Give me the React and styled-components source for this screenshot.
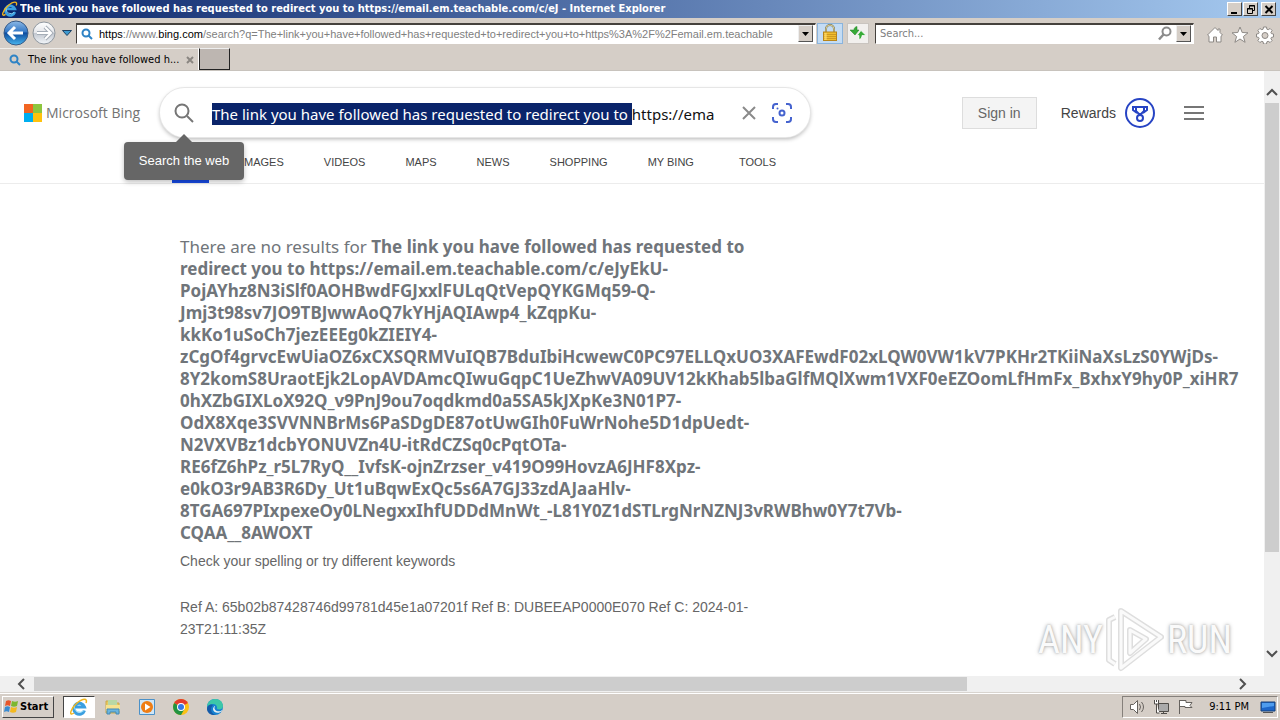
import { useEffect, useRef, useState } from "react";
import styled, { createGlobalStyle } from "styled-components";

const LINK_TEXT = "The link you have followed has requested to redirect you to ";

const TITLE = `${LINK_TEXT}https://email.em.teachable.com/c/eJ - Internet Explorer`;

const ADDRESS_PATH =
	"/search?q=The+link+you+have+followed+has+requested+to+redirect+you+to+https%3A%2F%2Femail.em.teachable";

const QUERY_LINES = [
	"redirect you to https://email.em.teachable.com/c/eJyEkU-",
	"PojAYhz8N3iSlf0AOHBwdFGJxxlFULqQtVepQYKGMq59-Q-",
	"Jmj3t98sv7JO9TBJwwAoQ7kYHjAQIAwp4_kZqpKu-",
	"kkKo1uSoCh7jezEEEg0kZIEIY4-",
	"zCgOf4grvcEwUiaOZ6xCXSQRMVuIQB7BduIbiHcwewC0PC97ELLQxUO3XAFEwdF02xLQW0VW1kV7PKHr2TKiiNaXsLzS0YWjDs-",
	"8Y2komS8UraotEjk2LopAVDAmcQIwuGqpC1UeZhwVA09UV12kKhab5lbaGlfMQlXwm1VXF0eEZOomLfHmFx_BxhxY9hy0P_xiHR7",
	"0hXZbGIXLoX92Q_v9PnJ9ou7oqdkmd0a5SA5kJXpKe3N01P7-",
	"OdX8Xqe3SVVNNBrMs6PaSDgDE87otUwGIh0FuWrNohe5D1dpUedt-",
	"N2VXVBz1dcbYONUVZn4U-itRdCZSq0cPqtOTa-",
	"RE6fZ6hPz_r5L7RyQ__IvfsK-ojnZrzser_v419O99HovzA6JHF8Xpz-",
	"e0kO3r9AB3R6Dy_Ut1uBqwExQc5s6A7GJ33zdAJaaHlv-",
	"8TGA697PIxpexeOy0LNegxxIhfUDDdMnWt_-L81Y0Z1dSTLrgNrNZNJ3vRWBhw0Y7t7Vb-",
	"CQAA__8AWOXT",
];

const SCOPES = ["IMAGES", "VIDEOS", "MAPS", "NEWS", "SHOPPING", "MY BING", "TOOLS"];

export default function App() {
	return (
		<>
			<GlobalStyle />
			<Desktop>
				<TitleBar>
					<IeLogo size={16} />
					<h1>{TITLE}</h1>
					<div className="controls">
						<CaptionButton aria-label="Minimize">
							<svg width="10" height="9">
								<path d="M1 8h6" stroke="#000" strokeWidth="2" />
							</svg>
						</CaptionButton>
						<CaptionButton aria-label="Restore">
							<svg width="10" height="9" fill="none" stroke="#000">
								<path d="M3.5 3V.5h5v5H7M3 1h6M1.5 3.5h5v5h-5zM1 4h6" />
							</svg>
						</CaptionButton>
						<CaptionButton $apart aria-label="Close">
							<svg width="10" height="9">
								<path d="M1.5 1l7 7M8.5 1l-7 7" stroke="#000" strokeWidth="2" />
							</svg>
						</CaptionButton>
					</div>
				</TitleBar>
				<AddressBar />
				<TabStrip>
					<Tab>
						<Magnifier />
						<span>The link you have followed h...</span>
						<button aria-label="Close tab">
							<svg width="8" height="8">
								<path d="M1 1l6 6M7 1L1 7" stroke="#8a8681" strokeWidth="2" />
							</svg>
						</button>
					</Tab>
					<NewTab aria-label="New tab" />
				</TabStrip>
				<Viewport>
					<Page>
						<BingHeader />
						<Results />
						<Watermark />
					</Page>
					<VerticalScroll>
						<Arrow d="M1 8l5-5 5 5" />
						<div className="track">
							<div className="thumb" />
						</div>
						<Arrow d="M1 3l5 5 5-5" />
					</VerticalScroll>
				</Viewport>
				<HorizontalScroll>
					<Arrow d="M8 1L3 6l5 5" />
					<div className="track">
						<div className="thumb" />
					</div>
					<Arrow d="M4 1l5 5-5 5" />
				</HorizontalScroll>
				<Taskbar />
			</Desktop>
		</>
	);
}

function AddressBar() {
	return (
		<Toolbar>
			<RoundButton aria-label="Back">
				<svg width="26" height="26" viewBox="0 0 26 26">
					<defs>
						<linearGradient id="back" x2="0" y2="1">
							<stop offset="0" stopColor="#8db9e6" />
							<stop offset=".45" stopColor="#3478c6" />
							<stop offset=".5" stopColor="#0d4b9e" />
							<stop offset="1" stopColor="#48b6ef" />
						</linearGradient>
					</defs>
					<circle cx="13" cy="13" r="12" fill="url(#back)" stroke="#385a86" />
					<path d="M20 13H7M12 7l-6 6 6 6" fill="none" stroke="#fff" strokeWidth="3" />
				</svg>
			</RoundButton>
			<RoundButton aria-label="Forward">
				<svg width="26" height="26" viewBox="0 0 26 26">
					<defs>
						<linearGradient id="forward" x2="0" y2="1">
							<stop offset="0" stopColor="#fff" />
							<stop offset=".48" stopColor="#e4e6ea" />
							<stop offset=".52" stopColor="#c3c8d0" />
							<stop offset="1" stopColor="#f3f7fb" />
						</linearGradient>
					</defs>
					<circle cx="13" cy="13" r="11" fill="url(#forward)" stroke="#8f979f" />
					<path d="M6 13h13M14 7l6 6-6 6" fill="none" stroke="#a5adb7" strokeWidth="4" />
					<path d="M6 13h13M14 7l6 6-6 6" fill="none" stroke="#fff" strokeWidth="2" />
				</svg>
			</RoundButton>
			<RoundButton $small aria-label="Recent pages">
				<svg width="10" height="6">
					<path d="M.5.5h9L5 5.5z" fill="#3d9ad0" stroke="#1b4164" />
				</svg>
			</RoundButton>
			<Field $grow>
				<Magnifier />
				<Address>
					<input aria-label="Address" defaultValue={`https://www.bing.com${ADDRESS_PATH}`} />
					<span aria-hidden="true">
						<b>https</b>://www.<b>bing.com</b>
						{ADDRESS_PATH}
					</span>
				</Address>
				<DropButton aria-label="Show address list">
					<svg width="7" height="4">
						<path d="M0 0h7L3.5 4z" />
					</svg>
				</DropButton>
			</Field>
			<SquareButton $active aria-label="Security report">
				<svg width="16" height="18" viewBox="0 0 16 18">
					<path d="M4 9V5a4 4 0 0 1 8 0v4" fill="none" stroke="#817a58" strokeWidth="2" />
					<path d="M4 8V5a4 4 0 0 1 8 0v3" fill="none" stroke="#d6cb93" />
					<rect x="1.5" y="8" width="13" height="8.5" fill="#f0be2e" stroke="#b8851a" />
					<path d="M2 10.5h12M2 12.5h12M2 14.5h12" stroke="#cf9a22" />
					<path d="M3 9v7M4 9v7" stroke="#ffdc6e" />
				</svg>
			</SquareButton>
			<SquareButton aria-label="Refresh">
				<svg width="18" height="16" viewBox="0 0 18 16">
					<path d="M8 1.5C6 2 5 3 5 5H1l5 5 4-5H8c0-2 0-2 0-3.5z" fill="#37ab37" stroke="#1e7c25" strokeWidth=".5" />
					<path d="M10 14.5c2-.5 3-2 3-4h4l-5-5-4 5h2c0 2 0 2 0 4z" fill="#37ab37" stroke="#fff" strokeWidth=".7" />
				</svg>
			</SquareButton>
			<Field $width={319}>
				<input aria-label="Search" placeholder="Search..." />
				<svg width="14" height="15" viewBox="0 0 14 15" fill="none" stroke="#8b8b8b">
					<circle cx="8.5" cy="5.5" r="4" strokeWidth="2" />
					<path d="M5.5 8.5L1 13.5" strokeWidth="2.5" />
				</svg>
				<DropButton aria-label="Search options">
					<svg width="7" height="4">
						<path d="M0 0h7L3.5 4z" />
					</svg>
				</DropButton>
			</Field>
			<CommandIcons>
				<button aria-label="Home">
					<svg width="18" height="18" viewBox="0 0 18 18">
						<path d="M9 1.5L1.5 9l1.5 1.2V16h4.5v-5h3v5H15v-5.8L16.5 9 14 6.5V3h-2v1.5z" />
					</svg>
				</button>
				<button aria-label="Favorites">
					<svg width="18" height="18" viewBox="0 0 18 18">
						<path d="M9 1l2.2 5.5 5.8.3-4.6 3.7 1.7 5.8L9 13l-5.1 3.3 1.7-5.8L1 6.8l5.8-.3z" />
					</svg>
				</button>
				<button aria-label="Tools">
					<svg width="18" height="18" viewBox="0 0 18 18">
						<path d="M7.5 1h3l.4 2.2 1.3.5 1.9-1.2 2 2-1.2 1.9.5 1.2 2.1.4v3l-2.1.4-.5 1.2 1.2 1.9-2 2-1.9-1.2-1.3.5-.4 2.2h-3l-.4-2.2-1.3-.5-1.9 1.2-2-2 1.2-1.9-.5-1.2L.5 11V8l2.1-.4.5-1.2-1.2-1.9 2-2 1.9 1.2 1.3-.5z" />
						<circle cx="9" cy="9.5" r="3" />
					</svg>
				</button>
			</CommandIcons>
		</Toolbar>
	);
}

function BingHeader() {
	const box = useRef(null);
	const [query, setQuery] = useState(`${LINK_TEXT}https://ema`);

	useEffect(() => {
		box.current.focus({ preventScroll: true });
		box.current.setSelectionRange(0, LINK_TEXT.length, "backward");
		box.current.scrollLeft = 0;
	}, []);

	return (
		<Header>
			<TopRow>
				<Brand href="#">
					<svg width="18" height="18">
						<path d="M0 0h9v9H0z" fill="#f26522" />
						<path d="M9 0h9v9H9z" fill="#8dc63f" />
						<path d="M0 9h9v9H0z" fill="#00aeef" />
						<path d="M9 9h9v9H9z" fill="#ffc20e" />
					</svg>
					Microsoft Bing
				</Brand>
				<SearchBox>
					<button aria-label="Search the web">
						<svg width="20" height="20" fill="none" stroke="#767676" strokeWidth="2">
							<circle cx="8" cy="8" r="6.5" />
							<path d="M13 13l6 6" />
						</svg>
					</button>
					<input
						ref={box}
						aria-label="Enter your search term"
						value={query}
						onChange={(e) => {
							setQuery(e.target.value);
						}}
					/>
					<button aria-label="Clear text">
						<svg width="14" height="14" stroke="#8a8a8a" strokeWidth="2">
							<path d="M1 1l12 12M13 1L1 13" />
						</svg>
					</button>
					<button aria-label="Search using an image">
						<svg width="20" height="20" fill="none" stroke="#4563cf" strokeWidth="2">
							<path d="M1 6V4a3 3 0 0 1 3-3h2M14 1h2a3 3 0 0 1 3 3v2M19 14v2a3 3 0 0 1-3 3h-2M6 19H4a3 3 0 0 1-3-3v-2" />
							<circle cx="10" cy="10" r="2.5" />
							<circle cx="5.5" cy="5.5" r="1" fill="#4563cf" stroke="none" />
						</svg>
					</button>
					<Tooltip role="tooltip">Search the web</Tooltip>
				</SearchBox>
				<Account>
					<button className="sign-in">Sign in</button>
					<a href="#">
						Rewards
						<svg width="30" height="30" viewBox="0 0 30 30" fill="none" stroke="#2744c4" strokeWidth="2">
							<circle cx="15" cy="15" r="14" />
							<path d="M11 9h8v4l-3 3h-2l-3-3zM11 9H8v3l4 3M19 9h3v3l-4 3" />
							<circle cx="15" cy="20" r="3" fill="#fff" />
						</svg>
					</a>
					<button className="menu" aria-label="Settings and quick links">
						<svg width="20" height="14" stroke="#767676" strokeWidth="2">
							<path d="M0 1h20M0 7h20M0 13h20" />
						</svg>
					</button>
				</Account>
			</TopRow>
			<Scopes>
				<a className="current" href="#" aria-label="All" />
				{SCOPES.map((scope) => (
					<a key={scope} href="#">
						{scope}
					</a>
				))}
			</Scopes>
		</Header>
	);
}

function Results() {
	return (
		<NoResults>
			<h2>
				There are no results for{" "}
				<strong>
					The link you have followed has requested to
					{QUERY_LINES.map((line) => (
						<span key={line}>{line}</span>
					))}
				</strong>
			</h2>
			<p>Check your spelling or try different keywords</p>
			<p className="ref">
				Ref A: 65b02b87428746d99781d45e1a07201f Ref B: DUBEEAP0000E070 Ref C: 2024-01-23T21:11:35Z
			</p>
		</NoResults>
	);
}

function Watermark() {
	return (
		<Mark>
			ANY
			<svg width="58" height="64" viewBox="0 0 58 64" fill="none" strokeLinejoin="round">
				<g stroke="#dedede" strokeWidth="6">
					<path d="M9 9L3 12v40l6 4M15 3l40 26-40 31zM24 22l16 9-16 14z" />
				</g>
				<g stroke="#fafafa" strokeWidth="3">
					<path d="M9 9L3 12v40l6 4M15 3l40 26-40 31zM24 22l16 9-16 14z" />
				</g>
			</svg>
			RUN
		</Mark>
	);
}

function Taskbar() {
	return (
		<Bar>
			<StartButton>
				<svg width="16" height="16" viewBox="0 0 16 16">
					<path d="M3 2c2-1 3-1 5 0L7 7C5 6 4 6 2 7z" fill="#e8562a" />
					<path d="M9 2c2 1 4 1 6 0l-1 5c-2 1-4 1-6 0z" fill="#7db72f" />
					<path d="M2 8c2-1 3-1 5 0l-1 5c-2-1-3-1-5 0z" fill="#3a8bd1" />
					<path d="M8 8c2 1 4 1 6 0l-1 5c-2 1-4 1-6 0z" fill="#f4b91f" />
				</svg>
				Start
			</StartButton>
			<TaskButton $active aria-label="Internet Explorer">
				<IeLogo size={18} />
			</TaskButton>
			<TaskButton aria-label="File Explorer">
				<svg width="18" height="18" viewBox="0 0 18 18">
					<path d="M2 3h5l1 2h7v10H2z" fill="#e9c95d" stroke="#c9a94a" />
					<path d="M4 2h9v5H4z" fill="#b8d8a5" />
					<path d="M2 7h14v6H2z" fill="#f6e28f" />
					<path d="M3 16v-5h12v5h-3v-2H6v2z" fill="#69b5df" stroke="#4489b5" />
				</svg>
			</TaskButton>
			<TaskButton aria-label="Media Player">
				<svg width="16" height="16">
					<path d="M.5.5h15v15H.5z" fill="#cfe6f7" stroke="#4b91c8" />
					<circle cx="8" cy="8" r="6" fill="#ef7d14" />
					<path d="M6 4.5v7L11.5 8z" fill="#fff" />
				</svg>
			</TaskButton>
			<TaskButton aria-label="Chrome">
				<svg width="16" height="16" viewBox="0 0 16 16">
					<circle cx="8" cy="8" r="8" fill="#fbc116" />
					<path d="M8 8L1.1 4A8 8 0 0 1 14.9 4z" fill="#e33b2e" />
					<path d="M8 8L1.1 4A8 8 0 0 0 8 16l3.5-6z" fill="#229342" />
					<circle cx="8" cy="8" r="4" fill="#fff" />
					<circle cx="8" cy="8" r="3" fill="#3578e5" />
				</svg>
			</TaskButton>
			<TaskButton aria-label="Edge">
				<svg width="16" height="16" viewBox="0 0 16 16">
					<circle cx="8" cy="8" r="8" fill="#1682d1" />
					<path d="M0 8C.5-2.5 15.5-2.5 16 7c0 3-3 4-6 3 1-5-5-7-10-2z" fill="#3cc7a8" />
					<path d="M6 6c-4 4-1 9 3 10-7 1-11-5-8-9 1-1 3-2 5-1z" fill="#155ba8" />
					<path d="M8 7c-2 4 2 6 6 5 0-1 1-1 1 0-3 3-9 2-9-2 0-1 1-3 2-3z" fill="#e7eff3" />
				</svg>
			</TaskButton>
			<Tray>
				<svg width="17" height="16" fill="#fff" stroke="#66625e">
					<path d="M1.5 5.5h3l4-4v13l-4-4h-3z" />
					<path d="M10.5 5q2 3 0 6M12.5 3q4 5 0 10" fill="none" />
				</svg>
				<svg width="17" height="16" fill="#fff" stroke="#504d49">
					<path d="M5.5 4.5h10v8h-10z" fill="#aaa" />
					<path d="M8 14.5h6M10.5 12v2M1.5 1v4h4V1M3.5 1v2M3.5 5v9h3" />
				</svg>
				<svg width="17" height="16" fill="#fff" stroke="#66625e">
					<path d="M2.5 1v14M3 1.5h6v2h6l-2 3 2 2H8v-1H3" />
				</svg>
				<time>9:11 PM</time>
				<svg width="16" height="14">
					<path d="M1 2h14v9H1z" fill="#1d66c9" stroke="#164078" />
					<path d="M2 3h12v3L2 8z" fill="#4e9cee" />
					<path d="M3 12h10v1H3z" fill="#555" />
				</svg>
			</Tray>
		</Bar>
	);
}

function IeLogo({ size }) {
	return (
		<svg width={size} height={size} viewBox="0 0 18 18" fill="none">
			<path d="M14.5 12.5A5.5 5.5 0 1 1 14.5 9H5" stroke="#3b9fe0" strokeWidth="3" />
			<path d="M14 12.5A5.5 5.5 0 0 1 4.5 8" stroke="#8fdcfa" />
			<path d="M4 15C-2 19 1 10 7 5s11-5 9 0" stroke="#f0b51e" strokeWidth="1.5" />
		</svg>
	);
}

function Magnifier() {
	return (
		<svg width="12" height="12" viewBox="0 0 12 12" fill="none" stroke="#2e83c5" strokeWidth="2">
			<circle cx="5" cy="5" r="3.5" />
			<path d="M7.5 7.5L11 11" />
		</svg>
	);
}

function Arrow({ d }) {
	return (
		<svg width="12" height="12" fill="none" stroke="#505050" strokeWidth="2">
			<path d={d} />
		</svg>
	);
}

const GlobalStyle = createGlobalStyle`
	:root {
		--chrome: #d5cec7;
		--ui-font: "DejaVu Sans Condensed", "DejaVu Sans", sans-serif;
		--segoe: "Noto Sans", sans-serif;
		--arial: "Liberation Sans", Arial, sans-serif;
	}

	* {
		box-sizing: border-box;
	}

	body {
		margin: 0;
	}

	button,
	input {
		border: 0;
		padding: 0;
		margin: 0;
		background: none;
		font: inherit;
		color: inherit;
		outline: none;
	}

	a {
		color: inherit;
		text-decoration: none;
	}

	svg {
		flex: none;
		display: block;
	}
`;

const Desktop = styled.div`
	height: 100vh;
	display: flex;
	flex-direction: column;
	overflow: hidden;
	background-color: var(--chrome);
	font: 11px/14px var(--ui-font);
`;

const TitleBar = styled.header`
	flex: none;
	height: 18px;
	padding: 0 4px 0 2px;
	display: flex;
	align-items: center;
	gap: 2px;
	background: linear-gradient(90deg, #0a246a, #a6caf0);

	h1 {
		flex: 1;
		margin: 0;
		font-size: 11px;
		color: #fff;
		white-space: nowrap;
		overflow: hidden;
	}

	.controls {
		display: flex;
		gap: 1px;
	}
`;

const CaptionButton = styled.button`
	width: 15px;
	height: 14px;
	margin-left: ${(p) => (p.$apart ? 2 : 0)}px;
	display: grid;
	place-items: center;
	background-color: var(--chrome);
	border: 1px solid;
	border-color: #fff #444 #444 #fff;
`;

const Toolbar = styled.div`
	flex: none;
	height: 30px;
	padding: 0 6px 0 2px;
	display: flex;
	align-items: center;
`;

const RoundButton = styled.button`
	width: ${(p) => (p.$small ? 18 : 28)}px;
	display: grid;
	place-items: center;
`;

const Field = styled.div`
	flex: ${(p) => (p.$grow ? "1 1 0" : `0 1 ${p.$width}px`)};
	min-width: 0;
	height: 21px;
	padding: 0 2px 0 4px;
	display: flex;
	align-items: center;
	gap: 4px;
	background-color: #fff;
	border: 1px solid;
	border-color: #45413d #fff #fff #45413d;
	border-top-width: 2px;
	color: #808080;

	> input {
		flex: 1;
		min-width: 0;
	}

	input::placeholder {
		color: #808080;
	}
`;

const Address = styled.div`
	flex: 1;
	min-width: 0;
	padding-left: 2px;
	display: grid;
	overflow: hidden;
	white-space: nowrap;
	font-family: var(--arial);

	> * {
		grid-area: 1 / 1;
		min-width: 0;
	}

	input {
		color: transparent;
		caret-color: #000;
	}

	span {
		pointer-events: none;
	}

	b {
		font-weight: normal;
		color: #000;
	}
`;

const DropButton = styled.button`
	flex: none;
	width: 15px;
	height: 17px;
	display: grid;
	place-items: center;
	background-color: var(--chrome);
	border: 1px solid;
	border-color: #eee #555 #555 #eee;
`;

const SquareButton = styled.button`
	flex: none;
	width: ${(p) => (p.$active ? 26 : 22)}px;
	height: 21px;
	margin: 0 3px 0 1px;
	display: grid;
	place-items: center;
	background-color: ${(p) => (p.$active ? "#c4dcf4" : "#f2f0ee")};
	border: 1px solid ${(p) => (p.$active ? "#8ab4dd" : "#c9c4bf")};

	& + & {
		margin-right: 6px;
	}
`;

const CommandIcons = styled.div`
	margin-left: 12px;
	padding-top: 4px;
	display: flex;
	gap: 7px;

	path {
		fill: #fff;
		stroke: #8d8985;
	}

	circle {
		fill: var(--chrome);
		stroke: #8d8985;
	}
`;

const TabStrip = styled.div`
	flex: none;
	height: 23px;
	display: flex;
	border-bottom: 1px solid #c8c3bd;
`;

const Tab = styled.div`
	width: 199px;
	padding: 0 6px 0 9px;
	display: flex;
	align-items: center;
	gap: 7px;
	border-top: 1px solid #f0eeeb;
	border-right: 1px solid #fff;

	span {
		flex: 1;
		white-space: nowrap;
	}
`;

const NewTab = styled.button`
	width: 31px;
	background-color: #bdb6b1;
	border: 1px solid #222;
	border-top-color: #eee;
`;

const Viewport = styled.div`
	flex: 1;
	min-height: 0;
	display: flex;
`;

const Page = styled.main`
	position: relative;
	flex: 1;
	min-width: 0;
	overflow: hidden;
	background-color: #fff;
	font-family: var(--arial);
`;

const VerticalScroll = styled.div`
	flex: none;
	width: 16px;
	padding: 16px 0;
	display: flex;
	flex-direction: column;
	align-items: center;
	gap: 4px;
	background-color: #f0f0f0;

	.track {
		flex: 1;
		width: 14px;
	}

	.thumb {
		height: 83%;
		background-color: #cdcdcd;
	}
`;

const HorizontalScroll = styled.div`
	flex: none;
	height: 17px;
	padding: 0 32px 0 16px;
	display: flex;
	align-items: center;
	gap: 6px;
	background-color: #f0f0f0;
	border-bottom: 1px solid #d8d4cf;

	.track {
		flex: 1;
		height: 14px;
	}

	.thumb {
		height: 100%;
		width: 78%;
		background-color: #cdcdcd;
	}
`;

const Header = styled.header`
	height: 113px;
	padding-top: 17px;
	border-bottom: 1px solid #ececec;
`;

const TopRow = styled.div`
	padding: 0 60px 0 24px;
	display: flex;
	align-items: center;
`;

const Brand = styled.a`
	flex: none;
	width: 136px;
	display: flex;
	align-items: center;
	gap: 4px;
	font: 500 14px/20px "Open Sans", sans-serif;
	color: #737373;
	white-space: nowrap;
`;

const SearchBox = styled.div`
	position: relative;
	flex: 0 1 650px;
	min-width: 0;
	height: 49px;
	padding: 0 18px 0 14px;
	display: flex;
	align-items: center;
	gap: 16px;
	border-radius: 25px;
	background-color: #fff;
	box-shadow: 0 0 0 1px #e6e6e6, 0 2px 4px rgba(0, 0, 0, 0.3);

	input {
		flex: 1;
		min-width: 0;
		margin: 2px 8px 0 2px;
		font: 15px/22px var(--segoe);
		color: #111;
		caret-color: transparent;
	}

	input::selection {
		color: #fff;
		background-color: #0a246a;
	}
`;

const Tooltip = styled.div`
	position: absolute;
	top: 54px;
	left: -36px;
	width: 120px;
	height: 38px;
	border-radius: 4px;
	background-color: #666;
	box-shadow: 0 2px 5px rgba(0, 0, 0, 0.25);
	color: #fff;
	font-size: 13px;
	line-height: 37px;
	text-align: center;

	&::before {
		content: "";
		position: absolute;
		bottom: 100%;
		left: 52px;
		border: 8px solid transparent;
		border-top: 0;
		border-bottom-color: #666;
	}
`;

const Account = styled.div`
	margin-left: auto;
	display: flex;
	align-items: center;
	gap: 24px;
	font-size: 14px;
	color: #444;

	.sign-in {
		width: 75px;
		height: 32px;
		background-color: #f4f4f4;
		border: 1px solid #ddd;
		color: #666;
	}

	a {
		display: flex;
		align-items: center;
		gap: 9px;
	}

	.menu {
		margin-left: 5px;
	}
`;

const Scopes = styled.nav`
	height: 46px;
	padding-left: 172px;
	display: flex;
	gap: 40px;
	font-size: 11px;
	line-height: 50px;
	color: #444;

	.current {
		width: 37px;
		margin-right: -8px;
		border-bottom: 3px solid #174ae4;
	}

	a:last-child {
		margin-left: 5px;
	}
`;

const NoResults = styled.section`
	width: 750px;
	padding: 52px 0 0 180px;
	font-size: 14px;
	line-height: 22px;
	color: #666;

	h2 {
		margin: 0 0 6px;
		font: 17px/22px var(--segoe);
		white-space: nowrap;
		color: #70757a;
	}

	span {
		display: block;
	}

	p {
		margin: 0;
	}

	.ref {
		margin-top: 24px;
	}
`;

const Mark = styled.div`
	position: absolute;
	right: 32px;
	bottom: 4px;
	display: flex;
	align-items: center;
	gap: 3px;
	font: 38px/64px "Roboto Condensed", "Open Sans Condensed", Roboto, sans-serif;
	color: #fafafa;
	text-shadow: 0 0 4px #aaa, 0 0 2px #bbb;
`;

const Bar = styled.footer`
	flex: none;
	height: 27px;
	padding: 2px;
	display: flex;
	align-items: center;
	gap: 2px;
	border-top: 1px solid #fff;
`;

const StartButton = styled.button`
	width: 52px;
	height: 22px;
	margin-right: 7px;
	display: flex;
	align-items: center;
	gap: 1px;
	border: 1px solid;
	border-color: #fff #444 #444 #fff;
	font-weight: bold;
	color: #000;
`;

const TaskButton = styled.button`
	width: 32px;
	height: 22px;
	display: grid;
	place-items: center;
	background-color: ${(p) => (p.$active ? "#fff" : "transparent")};
	border: 1px solid;
	border-color: ${(p) => (p.$active ? "#444 #fff #fff #444" : "transparent")};
`;

const Tray = styled.div`
	height: 22px;
	margin-left: auto;
	padding: 0 1px 0 6px;
	display: flex;
	align-items: center;
	gap: 7px;
	border: 1px solid;
	border-color: #85807b #fff #fff #85807b;

	time {
		margin: 0 4px 0 8px;
	}
`;
